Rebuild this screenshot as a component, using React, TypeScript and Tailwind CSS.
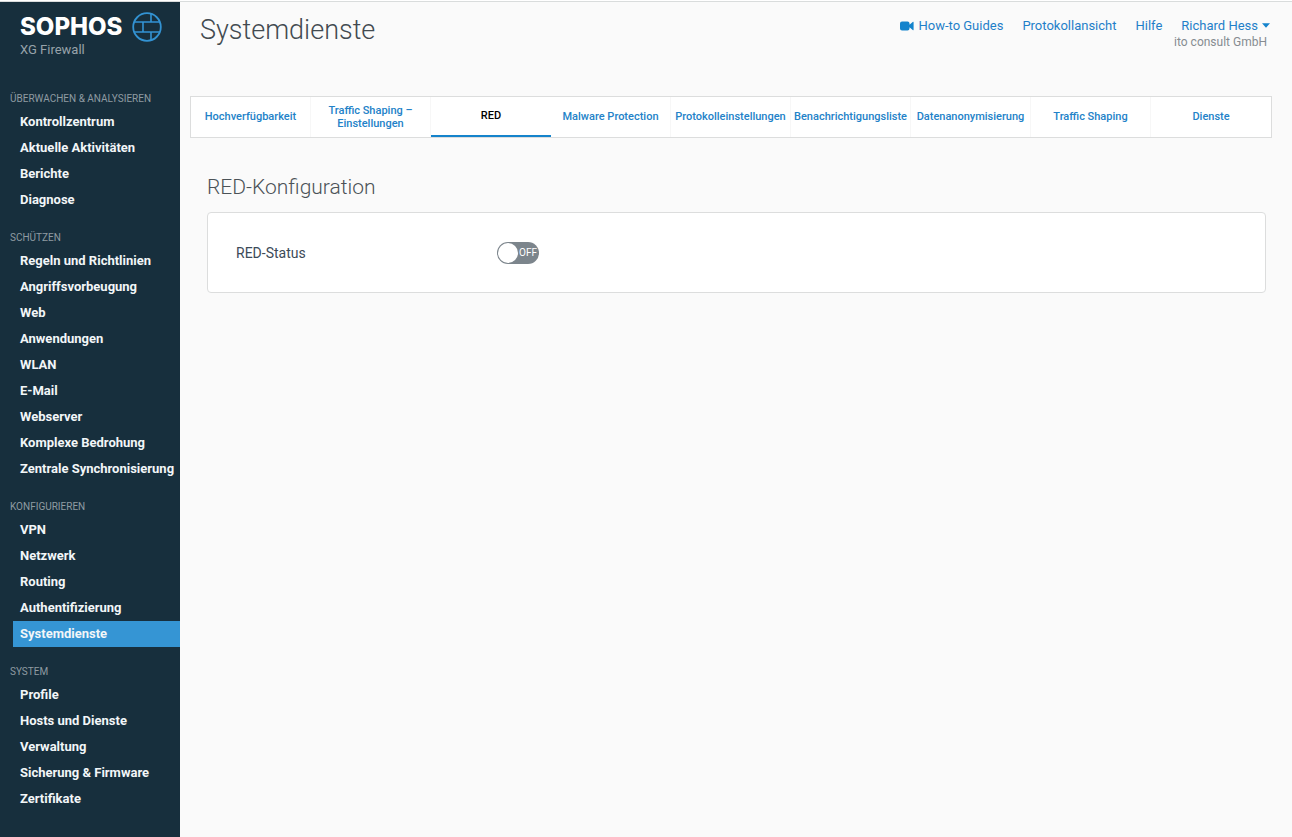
import { useState } from "react";

const groups = [
  {
    title: "ÜBERWACHEN & ANALYSIEREN",
    items: ["Kontrollzentrum", "Aktuelle Aktivitäten", "Berichte", "Diagnose"],
  },
  {
    title: "SCHÜTZEN",
    items: [
      "Regeln und Richtlinien",
      "Angriffsvorbeugung",
      "Web",
      "Anwendungen",
      "WLAN",
      "E-Mail",
      "Webserver",
      "Komplexe Bedrohung",
      "Zentrale Synchronisierung",
    ],
  },
  {
    title: "KONFIGURIEREN",
    items: ["VPN", "Netzwerk", "Routing", "Authentifizierung", "Systemdienste"],
  },
  {
    title: "SYSTEM",
    items: ["Profile", "Hosts und Dienste", "Verwaltung", "Sicherung & Firmware", "Zertifikate"],
  },
];

const tabs = [
  "Hochverfügbarkeit",
  "Traffic Shaping – Einstellungen",
  "RED",
  "Malware Protection",
  "Protokolleinstellungen",
  "Benachrichtigungsliste",
  "Datenanonymisierung",
  "Traffic Shaping",
  "Dienste",
];

function FirewallIcon() {
  return (
    <svg viewBox="0 0 30 30" className="size-[30px]" fill="none" stroke="#3393d3" strokeWidth="1.8" aria-hidden="true">
      <circle cx="15" cy="15" r="13.8" />
      <path d="M2 10H28M2 20H28M19 1.8V10M11 10V20M19 20V28.2" strokeWidth="1.6" />
    </svg>
  );
}

function Sidebar() {
  return (
    <aside className="w-[180px] shrink-0 bg-[#172f3d]">
      <div className="h-[87px] pl-5 pt-[10px]">
        <div className="flex h-[30px] items-center gap-2">
          <span className="w-[104px] font-['Inter'] text-[24px] leading-[30px] font-extrabold text-white">SOPHOS</span>
          <FirewallIcon />
        </div>
        <div className="text-[13px] leading-4 text-[#98a3aa]">XG Firewall</div>
      </div>
      <nav className="flex flex-col gap-[15px] whitespace-nowrap">
        {groups.map((group) => (
          <section key={group.title}>
            <h2 className="pl-[10px] text-[10px] leading-5 text-[#8f9ba2]">{group.title}</h2>
            <ul>
              {group.items.map((item) => (
                <li key={item} className="pl-[13px]">
                  <a
                    href="#"
                    aria-current={item === "Systemdienste" ? "page" : undefined}
                    className={`block pl-[7px] text-[13px] leading-[26px] font-bold text-[#f2f6f8] ${
                      item === "Systemdienste" ? "bg-[#3595d4]" : ""
                    }`}
                  >
                    {item}
                  </a>
                </li>
              ))}
            </ul>
          </section>
        ))}
      </nav>
    </aside>
  );
}

export default function App() {
  const [enabled, setEnabled] = useState(false);
  return (
    <div className="flex min-h-screen flex-col bg-[#fafafa] font-['Roboto',sans-serif]">
      <div className="h-[2px] border-b border-[#d9dcdc] bg-white" />
      <div className="flex flex-1">
        <Sidebar />
        <main className="min-w-0 flex-1">
          <header className="flex h-[94px] justify-between pl-5 pr-[22px] pt-[10px]">
            <h1 className="text-[27px] leading-9 font-light text-[#424a50]">Systemdienste</h1>
            <div className="pt-[5px] text-[13px] leading-[17px]">
              <nav className="flex gap-[19px] text-[#1f7fc9]">
                <a href="#" className="flex items-center gap-1">
                  <svg viewBox="0 0 14 10" className="h-[10px] w-[14px]" fill="#1483cc" aria-hidden="true">
                    <path d="M2 0.5H7.5Q9.5 0.5 9.5 2.5V3.8L13 0.8Q13.6 0.5 13.6 1.2V8.8Q13.6 9.5 13 9.2L9.5 6.2V7.5Q9.5 9.5 7.5 9.5H2Q0 9.5 0 7.5V2.5Q0 0.5 2 0.5Z" />
                  </svg>
                  How-to Guides
                </a>
                <a href="#">Protokollansicht</a>
                <a href="#">Hilfe</a>
                <button type="button" className="flex items-center gap-1">
                  Richard Hess
                  <svg viewBox="0 0 8 5" className="h-[5px] w-2" fill="#1483cc" aria-hidden="true">
                    <path d="M0 0.3H8L4 4.8Z" />
                  </svg>
                </button>
              </nav>
              <div className="pr-[3px] text-right text-[12px] text-[#868c91]">ito consult GmbH</div>
            </div>
          </header>

          <nav className="ml-[10px] mr-5 grid h-[42px] grid-cols-9 border border-[#dcdddd] bg-white">
            {tabs.map((tab) => (
              <a
                key={tab}
                href="#"
                aria-current={tab === "RED" ? "page" : undefined}
                className={`flex min-w-0 items-center justify-center text-center text-[11px] leading-[13px] font-medium ${
                  tab === "RED"
                    ? "border-b-2 border-[#1583cb] text-black"
                    : "border-r border-[#f7f7f7] text-[#2382c8] last:border-r-0"
                }`}
              >
                <span className={tab.includes("–") ? "px-3" : "pb-px whitespace-nowrap"}>{tab}</span>
              </a>
            ))}
          </nav>

          <section className="pl-[27px] pr-[26px] pt-9">
            <h2 className="text-[21px] leading-[26px] font-light text-[#4b5257]">RED-Konfiguration</h2>
            <div className="mt-3 flex h-[81px] items-center rounded-[4px] border border-[#dcdddd] bg-white pl-7">
              <label htmlFor="red-status" className="w-[261px] text-[14px] leading-5 text-[#3c4a58]">
                RED-Status
              </label>
              <button
                id="red-status"
                type="button"
                role="switch"
                aria-checked={enabled}
                onClick={() => setEnabled(!enabled)}
                className={`flex h-[22px] w-[42px] items-center justify-between rounded-full px-px text-[10px] text-white ${
                  enabled ? "flex-row-reverse bg-[#1583cb]" : "bg-[#7c858c]"
                }`}
              >
                <span className="size-5 rounded-full bg-white" />
                <span className="px-px">{enabled ? "ON" : "OFF"}</span>
              </button>
            </div>
          </section>
        </main>
      </div>
    </div>
  );
}
